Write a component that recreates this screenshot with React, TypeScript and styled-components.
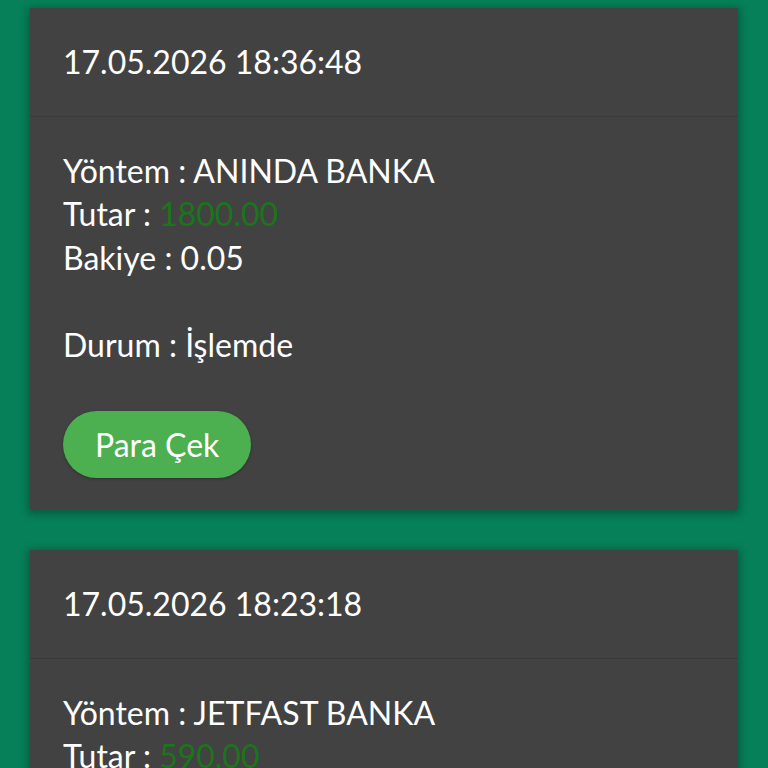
import * as React from 'react';
import styled, { createGlobalStyle } from 'styled-components';

const GlobalStyle = createGlobalStyle`
	html, body {
		margin: 0;
		padding: 0;
		background: #068058;
	}
	body {
		font-family: 'Lato', 'Noto Sans', sans-serif;
	}
`;

const Page = styled.div`
	display: flex;
	flex-direction: column;
	gap: 40px;
	padding: 8px 30px 40px 30px;
	box-sizing: border-box;
`;

const Card = styled.div`
	background-color: #424242;
	box-shadow: 0 2px 8px 2px rgba(0, 0, 0, 0.3);
	color: #ffffff;
	font-size: 32px;
	line-height: 43.5px;
`;

const Header = styled.div`
	padding: 32px 33px;
	border-bottom: 1px solid #393939;
`;

const Body = styled.div`
	padding: 32px 33px;
`;

const Line = styled.div<{ $gap?: boolean }>`
	margin-top: ${(p) => (p.$gap ? '43.5px' : '0')};
`;

const Amount = styled.span`
	color: #1b751b;
`;

const Button = styled.button`
	margin-top: 45px;
	height: 67px;
	padding: 0 32px;
	border: none;
	border-radius: 34px;
	background-color: #4caf50;
	color: #ffffff;
	font-family: inherit;
	font-size: 32px;
	box-shadow: 0 1px 3px rgba(0, 0, 0, 0.3);
`;

interface Withdrawal {
	date: string;
	method: string;
	amount: string;
	balance: string;
	status: string;
}

const items: Array<Withdrawal> = [
	{ date: '17.05.2026 18:36:48', method: 'ANINDA BANKA', amount: '1800.00', balance: '0.05', status: 'İşlemde' },
	{ date: '17.05.2026 18:23:18', method: 'JETFAST BANKA', amount: '590.00', balance: '0.05', status: 'İşlemde' },
];

const WithdrawalCard = ({ item }: { item: Withdrawal }) => (
	<Card>
		<Header>{item.date}</Header>
		<Body>
			<Line>Yöntem : {item.method}</Line>
			<Line>
				Tutar : <Amount>{item.amount}</Amount>
			</Line>
			<Line>Bakiye : {item.balance}</Line>
			<Line $gap>Durum : {item.status}</Line>
			<Button>Para Çek</Button>
		</Body>
	</Card>
);

const App = () => (
	<>
		<GlobalStyle />
		<Page>
			{items.map((item) => (
				<WithdrawalCard key={item.date} item={item} />
			))}
		</Page>
	</>
);

export default App;
